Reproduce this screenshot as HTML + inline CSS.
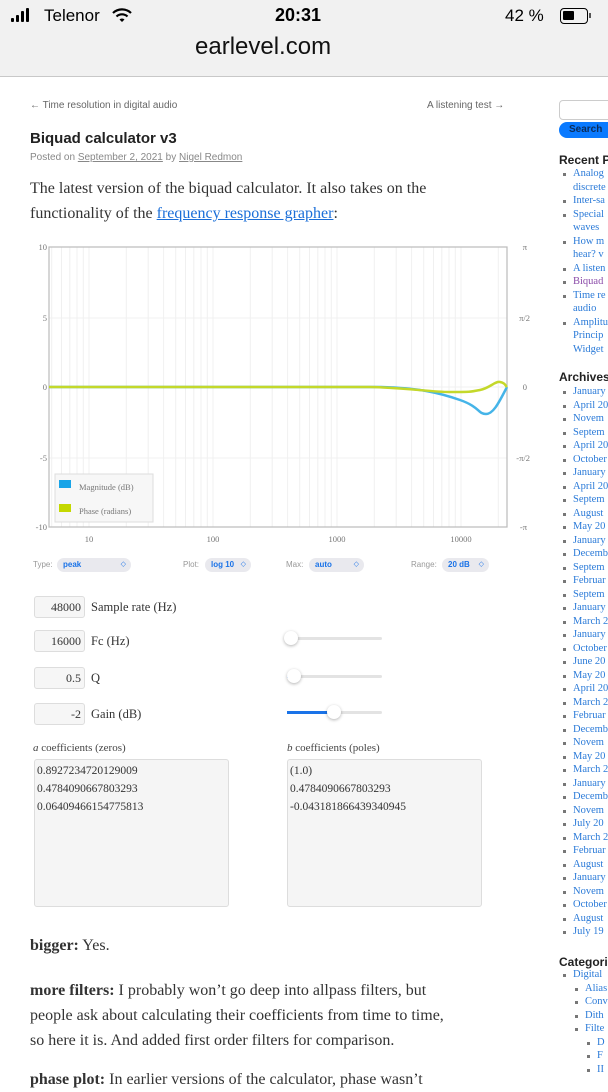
<!DOCTYPE html>
<html><head><meta charset="utf-8"><style>
*{margin:0;padding:0;box-sizing:border-box}
body{width:608px;height:1080px;overflow:hidden;background:#fff;position:relative;font-family:"Liberation Sans",sans-serif}
.a{position:absolute;white-space:nowrap}
.hdr{position:absolute;left:0;top:0;width:608px;height:77px;background:#f1f1f1;border-bottom:1px solid #c8c8c8}
.serif{font-family:"Liberation Serif",serif}
.sel{position:absolute;height:14px;background:#e9e9ee;border-radius:7px;font-size:8px;color:#1a73e8;font-weight:bold;line-height:14px;padding-left:6px}
.sel:after{content:"◇";position:absolute;right:5px;top:0;font-size:7px;font-weight:normal}
.lab{font-size:8px;color:#999}
.inp{position:absolute;left:34px;width:51px;height:22px;border:1px solid #ddd;border-radius:3px;background:#f6f6f6;font-family:"Liberation Serif",serif;font-size:12px;text-align:right;padding-right:3px;line-height:20px;color:#333}
.il{position:absolute;left:91px;font-family:"Liberation Serif",serif;font-size:12.5px;color:#333}
.track{position:absolute;left:287px;width:95px;height:3px;background:#e3e3e3;border-radius:2px}
.knob{position:absolute;width:14px;height:14px;border-radius:50%;background:#fff;box-shadow:0 1px 3px rgba(0,0,0,.3);top:-6px}
.ta{position:absolute;top:759px;width:195px;height:148px;border:1px solid #ddd;border-radius:3px;background:#f5f5f5;font-family:"Liberation Serif",serif;font-size:11.5px;color:#333;padding:2px 2px;line-height:18px}
.side{position:absolute;left:559px;font-family:"Liberation Serif",serif;font-size:10.5px;color:#2a7ad8;line-height:13.5px}
.side div{position:relative;padding-left:14px;white-space:nowrap}
.side div:before{content:"";position:absolute;left:4px;top:6px;width:3px;height:3px;background:#777}
.p{position:absolute;left:30px;font-family:"Liberation Serif",serif;font-size:16px;color:#333;line-height:25px;white-space:nowrap}
.bar{position:absolute;width:3px;background:#000;border-radius:1px}
</style></head><body>
<div class="hdr"></div>
<div class="bar" style="left:11px;top:18px;height:4px"></div>
<div class="bar" style="left:16px;top:15px;height:7px"></div>
<div class="bar" style="left:21px;top:11px;height:11px"></div>
<div class="bar" style="left:26px;top:8px;height:14px"></div>
<div class="a" style="left:44px;top:6px;font-size:17px;color:#000">Telenor</div>
<svg class="a" style="left:112px;top:8px" width="20" height="16" viewBox="0 0 20 16"><path d="M1 5a13 13 0 0 1 18 0" stroke="#000" stroke-width="2.2" fill="none"/><path d="M4.5 8.5a8 8 0 0 1 11 0" stroke="#000" stroke-width="2.2" fill="none"/><path d="M7.5 11.5a3.5 3.5 0 0 1 5 0L10 14z" fill="#000"/></svg>
<div class="a" style="left:275px;top:5px;font-size:18px;font-weight:bold;color:#000">20:31</div>
<div class="a" style="left:505px;top:6px;font-size:17px;color:#000">42 %</div>
<div class="a" style="left:560px;top:8px;width:28px;height:16px;border:1.5px solid #000;border-radius:4px"><div style="position:absolute;left:2px;top:2px;width:11px;height:9px;background:#000;border-radius:1px"></div></div>
<div class="a" style="left:589px;top:13px;width:2px;height:5px;background:#555"></div>
<div class="a" style="left:195px;top:33px;font-size:24px;color:#111">earlevel.com</div>

<div class="a" style="left:30px;top:100px;font-size:10px;color:#666">← Time resolution in digital audio</div>
<div class="a" style="left:427px;top:100px;font-size:10px;color:#666">A listening test →</div>
<div class="a" style="left:30px;top:130px;font-size:15px;font-weight:bold;color:#222">Biquad calculator v3</div>
<div class="a" style="left:30px;top:152px;font-size:10px;color:#888">Posted on <u>September 2, 2021</u> by <u>Nigel Redmon</u></div>
<div class="p" style="top:176px">The latest version of the biquad calculator. It also takes on the</div>
<div class="p" style="top:201px">functionality of the <u style="color:#1a6ed8">frequency response grapher</u>:</div>

<svg class="a" style="left:0;top:0" width="540" height="550" viewBox="0 0 540 550">
<g stroke="#f0f0f0" stroke-width="1">
<path d="M51.7 247V527M61.5 247V527M69.8 247V527M77 247V527M83.3 247V527M89 247V527M126.3 247V527M148.2 247V527M163.6 247V527M175.7 247V527M185.5 247V527M193.8 247V527M201 247V527M207.3 247V527M213 247V527M250.3 247V527M272.2 247V527M287.6 247V527M299.7 247V527M309.5 247V527M317.8 247V527M325 247V527M331.3 247V527M337 247V527M374.3 247V527M396.2 247V527M411.6 247V527M423.7 247V527M433.5 247V527M441.8 247V527M449 247V527M455.3 247V527M461 247V527M498.3 247V527"/>
<path d="M49 318H507M49 387H507M49 458H507"/>
</g>
<rect x="49" y="247" width="458" height="280" fill="none" stroke="#bbb" stroke-width="1.2"/>
<path d="M49 387L380 387C420 388 440 393 460 400S478 414 486 414S500 400 507 387" stroke="#45b4e8" stroke-width="2.5" fill="none"/>
<path d="M49 387L370 387C410 388 430 392 450 392S470 392 480 390S495 381 500 382S505 385 507 387" stroke="#c4d82a" stroke-width="2.5" fill="none"/>
<rect x="55" y="474" width="98" height="48" fill="#f7f7f7" stroke="#ddd"/>
<rect x="59" y="480" width="12" height="8" fill="#18a4e8"/>
<rect x="59" y="504" width="12" height="8" fill="#c4d800"/>
<g font-family="Liberation Serif,serif" font-size="8.5" fill="#777">
<text x="79" y="490">Magnitude (dB)</text><text x="79" y="514">Phase (radians)</text>
<text x="47" y="250" text-anchor="end">10</text><text x="47" y="321" text-anchor="end">5</text><text x="47" y="390" text-anchor="end">0</text><text x="47" y="461" text-anchor="end">-5</text><text x="47" y="530" text-anchor="end">-10</text>
<text x="89" y="542" text-anchor="middle">10</text><text x="213" y="542" text-anchor="middle">100</text><text x="337" y="542" text-anchor="middle">1000</text><text x="461" y="542" text-anchor="middle">10000</text>
<text x="527" y="250" text-anchor="end">π</text><text x="530" y="321" text-anchor="end">π/2</text><text x="527" y="390" text-anchor="end">0</text><text x="530" y="461" text-anchor="end">-π/2</text><text x="527" y="530" text-anchor="end">-π</text>
</g></svg>

<div class="a lab" style="left:33px;top:560px">Type:</div><div class="sel" style="left:57px;top:558px;width:74px">peak</div>
<div class="a lab" style="left:183px;top:560px">Plot:</div><div class="sel" style="left:205px;top:558px;width:46px">log 10</div>
<div class="a lab" style="left:286px;top:560px">Max:</div><div class="sel" style="left:309px;top:558px;width:55px">auto</div>
<div class="a lab" style="left:411px;top:560px">Range:</div><div class="sel" style="left:442px;top:558px;width:47px">20 dB</div>

<div class="inp" style="top:596px">48000</div><div class="il" style="top:600px">Sample rate (Hz)</div>
<div class="inp" style="top:630px">16000</div><div class="il" style="top:634px">Fc (Hz)</div>
<div class="inp" style="top:667px">0.5</div><div class="il" style="top:671px">Q</div>
<div class="inp" style="top:703px">-2</div><div class="il" style="top:707px">Gain (dB)</div>
<div class="track" style="top:637px"><div class="knob" style="left:-3px"></div></div>
<div class="track" style="top:675px"><div style="position:absolute;left:0;top:0;width:4px;height:3px;background:#1a73e8"></div><div class="knob" style="left:0px"></div></div>
<div class="track" style="top:711px"><div style="position:absolute;left:0;top:0;width:44px;height:3px;background:#1a73e8"></div><div class="knob" style="left:40px"></div></div>

<div class="a serif" style="left:33px;top:742px;font-size:11px;color:#444"><i>a</i> coefficients (zeros)</div>
<div class="a serif" style="left:287px;top:742px;font-size:11px;color:#444"><i>b</i> coefficients (poles)</div>
<div class="ta" style="left:34px">0.8927234720129009<br>0.4784090667803293<br>0.06409466154775813</div>
<div class="ta" style="left:287px">(1.0)<br>0.4784090667803293<br>-0.043181866439340945</div>

<div class="p" style="top:933px"><b>bigger:</b> Yes.</div>
<div class="p" style="top:978px"><b>more filters:</b> I probably won’t go deep into allpass filters, but</div>
<div class="p" style="top:1003px">people ask about calculating their coefficients from time to time,</div>
<div class="p" style="top:1028px">so here it is. And added first order filters for comparison.</div>
<div class="p" style="top:1067px"><b>phase plot:</b> In earlier versions of the calculator, phase wasn’t</div>

<div class="a" style="left:559px;top:100px;width:60px;height:20px;border:1px solid #ccc;border-radius:4px;background:#fff"></div>
<div class="a" style="left:559px;top:122px;width:60px;height:16px;border-radius:8px;background:#0a7aff;color:#0b2c5a;font-size:10px;font-weight:bold;line-height:16px;padding-left:10px">Search</div>
<div class="a" style="left:559px;top:153px;font-size:12px;font-weight:bold;color:#222">Recent Posts</div>
<div class="side" style="top:167px"><div>Analog<br>discrete</div><div>Inter-sa</div><div>Special<br>waves</div><div>How m<br>hear? v</div><div>A listen</div><div style="color:#8a4aa8">Biquad</div><div>Time re<br>audio</div><div>Amplitu<br>Princip<br>Widget</div></div>
<div class="a" style="left:559px;top:370px;font-size:12px;font-weight:bold;color:#222">Archives</div>
<div class="side" style="top:385px"><div>January</div><div>April 20</div><div>Novem</div><div>Septem</div><div>April 20</div><div>October</div><div>January</div><div>April 20</div><div>Septem</div><div>August</div><div>May 20</div><div>January</div><div>Decemb</div><div>Septem</div><div>Februar</div><div>Septem</div><div>January</div><div>March 2</div><div>January</div><div>October</div><div>June 20</div><div>May 20</div><div>April 20</div><div>March 2</div><div>Februar</div><div>Decemb</div><div>Novem</div><div>May 20</div><div>March 2</div><div>January</div><div>Decemb</div><div>Novem</div><div>July 20</div><div>March 2</div><div>Februar</div><div>August</div><div>January</div><div>Novem</div><div>October</div><div>August</div><div>July 19</div></div>
<div class="a" style="left:559px;top:955px;font-size:12px;font-weight:bold;color:#222">Categories</div>
<div class="side" style="top:968px"><div>Digital</div><div style="margin-left:12px">Alias</div><div style="margin-left:12px">Conv</div><div style="margin-left:12px">Dith</div><div style="margin-left:12px">Filte</div><div style="margin-left:24px">D</div><div style="margin-left:24px">F</div><div style="margin-left:24px">II</div></div>
</body></html>
